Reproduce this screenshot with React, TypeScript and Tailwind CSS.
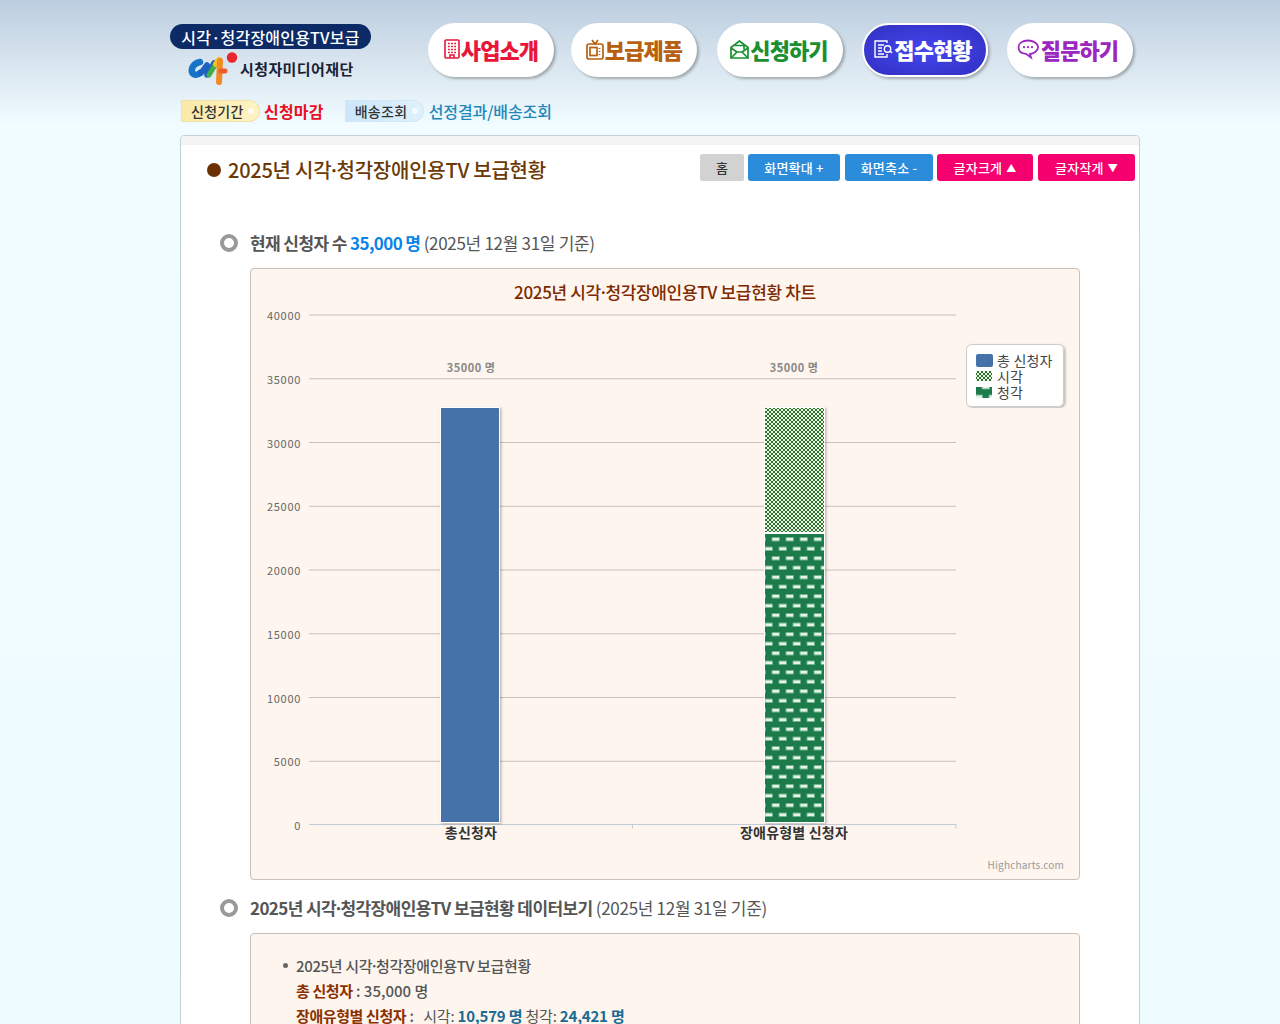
import React from "react";

const KR = "font-['Noto_Sans_CJK_KR','Noto_Sans',sans-serif]";

function BuildingIcon() {
  return (
    <svg width="16" height="20" viewBox="0 0 16 20" fill="none" stroke="currentColor" strokeWidth="1.6">
      <rect x="1" y="1" width="14" height="18" rx="1" />
      <path d="M4 4.500h8M4 7.500h8M4 10.500h8M4 13.500h8" strokeDasharray="1.8 1.3" />
      <path d="M6 19v-3h4v3" />
    </svg>
  );
}

function TvIcon() {
  return (
    <svg width="18" height="21" viewBox="0 0 18 21" fill="none" stroke="currentColor" strokeWidth="1.7">
      <path d="M6 1l3 4 3-4" />
      <rect x="1" y="5" width="16" height="15" rx="2" />
      <rect x="4" y="8.500" width="7" height="8" />
      <path d="M13.500 9v1M13.500 12v1M13.500 15v1" />
    </svg>
  );
}

function MailIcon() {
  return (
    <svg width="19" height="19" viewBox="0 0 19 19" fill="none" stroke="currentColor" strokeWidth="1.7">
      <path d="M1 7.500L9.500 1 18 7.500V18H1z" />
      <path d="M1 18l6-6h5l6 6M1 8l6 4M18 8l-6 4M5 5.500h9v4" />
    </svg>
  );
}

function DocIcon() {
  return (
    <svg width="19" height="18" viewBox="0 0 19 18" fill="none" stroke="currentColor" strokeWidth="1.400">
      <path d="M13 3V1H1v16h12v-3" />
      <path d="M4 5h6M4 8h4M4 11h4M4 14h6" />
      <circle cx="13.500" cy="9" r="3.200" />
      <path d="M16 11l2 2" />
    </svg>
  );
}

function ChatIcon() {
  return (
    <svg width="23" height="21" viewBox="0 0 23 21" fill="none" stroke="currentColor" strokeWidth="1.800">
      <path d="M11 1.500c5.500 0 10 2.800 10 6.700s-4.500 6.800-8 6.800l1 3.500-5-3.700C4.500 14.500 1.500 12 1.500 8.200 1.500 4.300 5.500 1.500 11 1.500z" />
      <circle cx="7" cy="8.200" r="1.100" fill="currentColor" stroke="none" />
      <circle cx="11" cy="8.200" r="1.100" fill="currentColor" stroke="none" />
      <circle cx="15" cy="8.200" r="1.100" fill="currentColor" stroke="none" />
    </svg>
  );
}

function LogoMark() {
  return (
    <svg width="52" height="34" viewBox="0 0 52 34" fill="none" strokeLinecap="round" strokeLinejoin="round">
      <path d="M13 10C7 11 4 16 5 20c1 3 5 4 8 1" stroke="#1673c8" strokeWidth="6.500" />
      <path d="M14 21l6-8v10l7-12" stroke="#1b62c0" strokeWidth="5.500" />
      <path d="M22 23l8-13" stroke="#43ad4a" strokeWidth="5" />
      <path d="M29 12l3-4" stroke="#f6c21c" strokeWidth="6" />
      <path d="M33 9l-1 21" stroke="#f08a24" strokeWidth="6" />
      <path d="M34 19h4" stroke="#ee5a2a" strokeWidth="5" />
      <circle cx="45" cy="5.500" r="5.200" fill="#e8262e" />
    </svg>
  );
}

// 제목의 가운뎃점은 폭이 좁게
const Dot = () => <span className="mx-[-0.15em]">·</span>;

const navItems = [
  { label: "사업소개", icon: <BuildingIcon />, cls: "ml-[57px] text-[#e8173a] bg-white" },
  { label: "보급제품", icon: <TvIcon />, cls: "ml-[17px] text-[#b8600f] bg-white" },
  { label: "신청하기", icon: <MailIcon />, cls: "ml-[20px] pr-[2px] text-[#1a9030] bg-white" },
  {
    label: "접수현황",
    icon: <DocIcon />,
    cls: "ml-[19px] pr-[4px] text-white bg-[radial-gradient(ellipse_at_center,#4646f0,#3030c0)] border-2 border-white",
  },
  { label: "질문하기", icon: <ChatIcon />, cls: "ml-[19px] pr-[5px] text-[#9c27c0] bg-white" },
];

const toolButtons = [
  { label: "화면확대 +", mark: "", cls: "w-[92px] ml-[4px] bg-[#2b8cdc]" },
  { label: "화면축소 -", mark: "", cls: "w-[88px] ml-[5px] bg-[#2b8cdc]" },
  { label: "글자크게", mark: "▲", cls: "w-[96px] ml-[4px] bg-[#f5006e]" },
  { label: "글자작게", mark: "▼", cls: "w-[97px] ml-[5px] bg-[#f5006e]" },
];

const yTicks = [40000, 35000, 30000, 25000, 20000, 15000, 10000, 5000, 0];

const chartFont = "'Noto Sans CJK KR'";

// 차트 좌표는 패널(250,268) 기준
function Chart() {
  const lineY = (i: number) => 46 + i * 63.75;
  return (
    <svg width="828" height="610" viewBox="0 0 828 610" className="block">
      <defs>
        <pattern id="checker" width="4" height="4" patternUnits="userSpaceOnUse">
          <rect width="4" height="4" fill="#eaf3dc" />
          <rect width="2" height="2" fill="#2f7236" />
          <rect x="2" y="2" width="2" height="2" fill="#2f7236" />
        </pattern>
        <pattern id="dashes" width="14" height="19" patternUnits="userSpaceOnUse">
          <rect width="14" height="19" fill="#1c7a4c" />
          <rect x="2.500" y="2" width="8.500" height="4.500" rx="1" fill="#6db48c" />
          <rect x="3.500" y="3" width="6.500" height="2.500" fill="#e6f3ea" />
          <rect x="-4.500" y="11.500" width="8.500" height="4.500" rx="1" fill="#6db48c" />
          <rect x="9.500" y="11.500" width="8.500" height="4.500" rx="1" fill="#6db48c" />
          <rect x="-3.500" y="12.500" width="6.500" height="2.500" fill="#e6f3ea" />
          <rect x="10.500" y="12.500" width="6.500" height="2.500" fill="#e6f3ea" />
        </pattern>
        <filter id="barShadow" x="-10%" y="-2%" width="125%" height="104%">
          <feDropShadow dx="1.500" dy="1" stdDeviation="1" floodColor="#000" floodOpacity="0.25" />
        </filter>
      </defs>

      <text x="414" y="30" textAnchor="middle" fontSize="17" fontWeight="500" fill="#7e2a00" fontFamily={chartFont} letterSpacing="-0.33">
        2025년 시각<tspan dx="-2.5">·</tspan><tspan dx="-2.5">청각장애인용TV 보급현황 차트</tspan>
      </text>

      {yTicks.map((v, i) => (
        <g key={v}>
          {i < 8 && <line x1="58" x2="705" y1={lineY(i)} y2={lineY(i)} stroke="#c8c0b8" />}
          <text x="50" y={lineY(i) + 5} textAnchor="end" fontSize="11" fill="#666" fontFamily={chartFont} letterSpacing="0.7">
            {v}
          </text>
        </g>
      ))}
      <path d="M58 555.500H705M381.500 555.500v4M705 555.500v4" stroke="#c0ccd8" fill="none" />

      <text x="220" y="103" textAnchor="middle" fontSize="11" fontWeight="700" fill="#888" fontFamily={chartFont} letterSpacing="0.5">35000 명</text>
      <text x="543" y="103" textAnchor="middle" fontSize="11" fontWeight="700" fill="#888" fontFamily={chartFont} letterSpacing="0.5">35000 명</text>

      <rect x="189.500" y="138.500" width="59" height="415" fill="#4572a7" stroke="#fff" filter="url(#barShadow)" />
      <rect x="513.500" y="138.500" width="60" height="125" fill="url(#checker)" stroke="#fff" filter="url(#barShadow)" />
      <rect x="513.500" y="264.500" width="60" height="289" fill="url(#dashes)" stroke="#fff" filter="url(#barShadow)" />

      <text x="220" y="569" textAnchor="middle" fontSize="14" fontWeight="700" fill="#333" fontFamily={chartFont} letterSpacing="0.2">총신청자</text>
      <text x="543" y="569" textAnchor="middle" fontSize="14" fontWeight="700" fill="#333" fontFamily={chartFont} letterSpacing="0.2">장애유형별 신청자</text>

      <text x="813" y="600" textAnchor="end" fontSize="10" fill="#999" fontFamily={chartFont} letterSpacing="0.2">Highcharts.com</text>

      {/* 범례 */}
      <rect x="715.500" y="75.500" width="97" height="62" rx="5" fill="#fff" stroke="#ccc" filter="url(#barShadow)" />
      <rect x="725" y="85" width="17" height="13" rx="2" fill="#4572a7" />
      <rect x="725" y="102" width="16" height="10" fill="url(#checker)" />
      <rect x="725" y="118" width="16" height="11" fill="url(#dashes)" />
      <g fontSize="14" fill="#444" fontFamily={chartFont} letterSpacing="0.2">
        <text x="746" y="97">총 신청자</text>
        <text x="746" y="113">시각</text>
        <text x="746" y="129">청각</text>
      </g>
    </svg>
  );
}

function SectionHeading({ children }: { children: React.ReactNode }) {
  return (
    <div className="flex items-center h-[26px] text-[17px] tracking-[-0.6px] text-[#555]">
      <span className="w-[18px] h-[18px] rounded-full border-[4px] border-[#999] bg-white mr-[12px] shrink-0" />
      <span>{children}</span>
    </div>
  );
}

function Tag({ label, cls }: { label: string; cls: string }) {
  return (
    <span className={`${cls} w-[79px] h-[22px] pl-[9px] pr-[5px] rounded-l-[3px] rounded-r-full border text-[14px] font-medium text-[#333] flex items-center justify-between tracking-[0.3px]`}>
      {label}
      <span className="w-[6px] h-[6px] rounded-full bg-white/70" />
    </span>
  );
}

export default function App() {
  return (
    <div className={`${KR} h-[1024px] overflow-hidden bg-[linear-gradient(#bbcde0_0px,#d8e4ee_60px,#f0fcff_125px,#effcff_100%)]`}>
      <header className="pl-[170px] pt-[23px]">
        <div className="flex items-start">
          <div className="w-[201px] pt-px">
            <div className="h-[25px] rounded-full bg-[#0b2a66] text-white text-[16px] font-medium flex items-center justify-center tracking-[0.2px]">
              시각·청각장애인용TV보급
            </div>
            <div className="flex items-center ml-[17px] mt-[2px] h-[36px]">
              <LogoMark />
              <span className="text-[15px] font-bold text-[#1a2233] tracking-[0.4px] ml-[1px]">시청자미디어재단</span>
            </div>
          </div>
          {navItems.map((n) => (
            <a
              key={n.label}
              className={`${n.cls} w-[126px] h-[54px] pb-[2px] rounded-full flex items-center justify-center gap-[1px] text-[22px] font-black tracking-[-0.9px] shadow-[2px_2px_3px_rgba(0,0,0,0.28)]`}
            >
              {n.icon}
              <span>{n.label}</span>
            </a>
          ))}
        </div>

        <div className="flex items-center mt-[12px] ml-[11px] h-[24px]">
          <Tag label="신청기간" cls="bg-[linear-gradient(90deg,#fbe9a8,#fdf3c4)] border-[#f3e2a6]" />
          <span className="ml-[4px] text-[16px] font-bold text-[#e8101e] tracking-[0.2px]">신청마감</span>
          <span className="ml-[21px]">
            <Tag label="배송조회" cls="bg-[linear-gradient(90deg,#cbe6fa,#dff1fc)] border-[#d2e8f6]" />
          </span>
          <span className="ml-[5px] text-[16px] font-medium text-[#2288bb] tracking-[-0.1px]">선정결과/배송조회</span>
        </div>
      </header>

      <main className="ml-[180px] mt-[12px] w-[960px] bg-white border border-[#c4d0d6] rounded-[4px]">
        <div className="h-[9px] rounded-t-[4px] bg-[#f3f3f3]" />
        <div className="flex items-start justify-between pl-[26px] pr-[4px] pt-[9px]">
          <div className="flex items-center h-[33px] -mt-px">
            <span className="w-[14px] h-[14px] rounded-full bg-[#6b3000] mr-[7px]" />
            <h1 className="text-[20px] font-medium text-[#6b3a07] tracking-[-0.25px]">
              2025년 시각<Dot />청각장애인용TV 보급현황
            </h1>
          </div>
          <div className="flex items-center h-[27px]">
            <span className="w-[44px] h-[27px] rounded-[2px] bg-[#d2d2d2] text-[13px] text-[#333] font-medium flex items-center justify-center">홈</span>
            {toolButtons.map((b) => (
              <span key={b.label} className={`${b.cls} h-[27px] rounded-[3px] text-white text-[13px] font-medium flex items-center justify-center gap-[4px] tracking-[0.2px]`}>
                {b.label}
                {b.mark && <span className="text-[10px]">{b.mark}</span>}
              </span>
            ))}
          </div>
        </div>

        <div className="pl-[39px] pt-[44px]">
          <SectionHeading>
            <b className="font-bold">현재 신청자 수 </b>
            <b className="font-bold text-[#0a84e8]">35,000 명</b> <span className="tracking-[-0.3px]">(2025년 12월 31일 기준)</span>
          </SectionHeading>

          <div className="ml-[30px] mt-[12px] w-[830px] h-[612px] bg-[#fdf5ee] border border-[#c8c0b8] rounded-[4px]">
            <Chart />
          </div>

          <div className="mt-[15px]">
            <SectionHeading>
              <b className="font-bold">2025년 시각<Dot />청각장애인용TV 보급현황 데이터보기</b>{" "}
              <span className="tracking-[-0.3px]">(2025년 12월 31일 기준)</span>
            </SectionHeading>
          </div>

          <div className="ml-[30px] mt-[12px] w-[830px] h-[200px] bg-[#fdf5ee] border border-[#c8c0b8] rounded-[4px] pt-[19px] pl-[32px] text-[15px] leading-[25px] text-[#555] font-medium">
            <div className="relative tracking-[-0.35px]">
              <span className="absolute left-0 top-[10px] w-[5px] h-[5px] rounded-full bg-[#666]" />
              <span className="ml-[13px]">2025년 시각<Dot />청각장애인용TV 보급현황</span>
            </div>
            <div className="ml-[13px]">
              <b className="font-bold text-[#8b3000] tracking-[-0.4px]">총 신청자</b> : 35,000 명
            </div>
            <div className="ml-[13px] tracking-[-0.2px]">
              <b className="font-bold text-[#8b3000] tracking-[-0.4px]">장애유형별 신청자</b> :&nbsp;&nbsp; <span className="font-normal">시각:</span>{" "}
              <b className="font-bold text-[#1b6b93]">10,579 명</b> <span className="font-normal">청각:</span>{" "}
              <b className="font-bold text-[#1b6b93]">24,421 명</b>
            </div>
          </div>
        </div>
      </main>
    </div>
  );
}
